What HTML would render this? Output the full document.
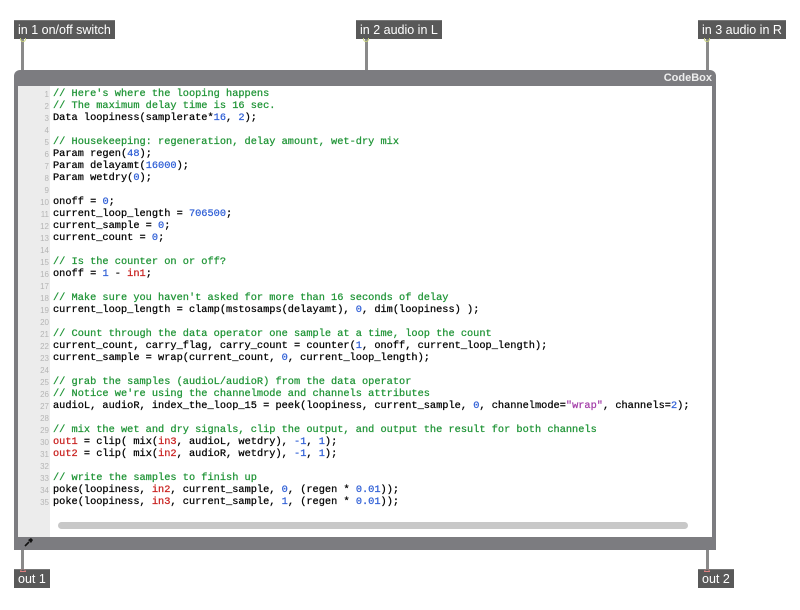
<!DOCTYPE html>
<html><head><meta charset="utf-8">
<style>
*{margin:0;padding:0;box-sizing:border-box}
body{width:800px;height:610px;background:#fff;position:relative;overflow:hidden;font-family:"Liberation Sans",sans-serif}
.lbl{position:absolute;background:#595959;color:#fff;font-size:12.5px;height:19px;line-height:19px;padding:0 4px;border-top:1px solid #777}
.wire{position:absolute;width:3px;background:#8a8a8a}
.dot{position:absolute;width:6px;height:4px;border-radius:0 0 3px 3px;border:1px solid #c7d27a;border-top:none}
.box{position:absolute;left:14px;top:70px;width:702px;height:480px;background:#7c7c80;border-radius:6px 6px 0 0}
.title{position:absolute;right:4px;top:1px;color:#eee;font-size:11px;font-weight:bold;line-height:14px}
.ed{position:absolute;left:4px;top:16px;width:694px;height:451px;background:#fff}
.gut{position:absolute;left:0;top:0;width:32px;height:451px;background:#ececec}
.code{position:absolute;left:0;top:2px;font-family:"Liberation Mono",monospace;font-size:10.3px;line-height:12px;white-space:pre}
.ln{position:absolute;left:0;width:31px;text-align:right;color:#b5b5b5;font-size:8px;font-family:"Liberation Sans",sans-serif}
.tx{position:absolute;left:35px;color:#000;-webkit-text-stroke:0.25px currentColor}
.c{color:#1f9436}.n{color:#2f5fd6}.r{color:#c8201e}.s{color:#a33ea8}
.scroll{position:absolute;left:40px;top:436px;width:630px;height:7px;border-radius:4px;background:#c8c8c8}
</style></head><body>
<div class="wire" style="left:21px;top:38px;height:34px"></div>
<div class="wire" style="left:365px;top:38px;height:34px"></div>
<div class="wire" style="left:706px;top:38px;height:34px"></div>
<div class="wire" style="left:21px;top:550px;height:20px"></div>
<div class="wire" style="left:706px;top:550px;height:20px"></div>
<div class="lbl" style="left:14px;top:20px">in 1 on/off switch</div>
<div class="lbl" style="left:356px;top:20px">in 2 audio in L</div>
<div class="lbl" style="left:698px;top:20px">in 3 audio in R</div>
<div class="dot" style="left:20px;top:38px"></div>
<div class="dot" style="left:363px;top:38px"></div>
<div class="dot" style="left:704px;top:38px"></div>
<div class="box">
<div class="title">CodeBox</div>
<div class="ed"><div class="gut"></div>
<div class="code" id="code"></div>
<div class="scroll"></div>
</div>
<svg style="position:absolute;left:10px;top:467px" width="10" height="10" viewBox="0 0 10 10"><path d="M1 9 L5 5" stroke="#111" stroke-width="1.6"/><path d="M4 3 L7 1 L9 3 L7 6 Z" fill="#111"/></svg>
</div>
<div class="lbl" style="left:14px;top:569px">out 1</div>
<div class="lbl" style="left:698px;top:569px">out 2</div>
<div class="dot" style="left:20px;top:569px;border-color:#e08080;border-radius:3px 3px 0 0;height:3px"></div>
<div class="dot" style="left:704px;top:569px;border-color:#e08080;border-radius:3px 3px 0 0;height:3px"></div>
<script>
var L=[
'<span class="c">// Here\'s where the looping happens</span>',
'<span class="c">// The maximum delay time is 16 sec.</span>',
'Data loopiness(samplerate*<span class="n">16</span>, <span class="n">2</span>);',
'',
'<span class="c">// Housekeeping: regeneration, delay amount, wet-dry mix</span>',
'Param regen(<span class="n">48</span>);',
'Param delayamt(<span class="n">16000</span>);',
'Param wetdry(<span class="n">0</span>);',
'',
'onoff = <span class="n">0</span>;',
'current_loop_length = <span class="n">706500</span>;',
'current_sample = <span class="n">0</span>;',
'current_count = <span class="n">0</span>;',
'',
'<span class="c">// Is the counter on or off?</span>',
'onoff = <span class="n">1</span> - <span class="r">in1</span>;',
'',
'<span class="c">// Make sure you haven\'t asked for more than 16 seconds of delay</span>',
'current_loop_length = clamp(mstosamps(delayamt), <span class="n">0</span>, dim(loopiness) );',
'',
'<span class="c">// Count through the data operator one sample at a time, loop the count</span>',
'current_count, carry_flag, carry_count = counter(<span class="n">1</span>, onoff, current_loop_length);',
'current_sample = wrap(current_count, <span class="n">0</span>, current_loop_length);',
'',
'<span class="c">// grab the samples (audioL/audioR) from the data operator</span>',
'<span class="c">// Notice we\'re using the channelmode and channels attributes</span>',
'audioL, audioR, index_the_loop_15 = peek(loopiness, current_sample, <span class="n">0</span>, channelmode=<span class="s">"wrap"</span>, channels=<span class="n">2</span>);',
'',
'<span class="c">// mix the wet and dry signals, clip the output, and output the result for both channels</span>',
'<span class="r">out1</span> = clip( mix(<span class="r">in3</span>, audioL, wetdry), <span class="n">-1</span>, <span class="n">1</span>);',
'<span class="r">out2</span> = clip( mix(<span class="r">in2</span>, audioR, wetdry), <span class="n">-1</span>, <span class="n">1</span>);',
'',
'<span class="c">// write the samples to finish up</span>',
'poke(loopiness, <span class="r">in2</span>, current_sample, <span class="n">0</span>, (regen * <span class="n">0.01</span>));',
'poke(loopiness, <span class="r">in3</span>, current_sample, <span class="n">1</span>, (regen * <span class="n">0.01</span>));'
];
var h='';
for(var i=0;i<L.length;i++){var t=i*12;
h+='<div class="ln" style="top:'+(t+1)+'px">'+(i+1)+'</div><div class="tx" style="top:'+t+'px">'+L[i]+'</div>';}
document.getElementById('code').innerHTML=h;
</script>
</body></html>
